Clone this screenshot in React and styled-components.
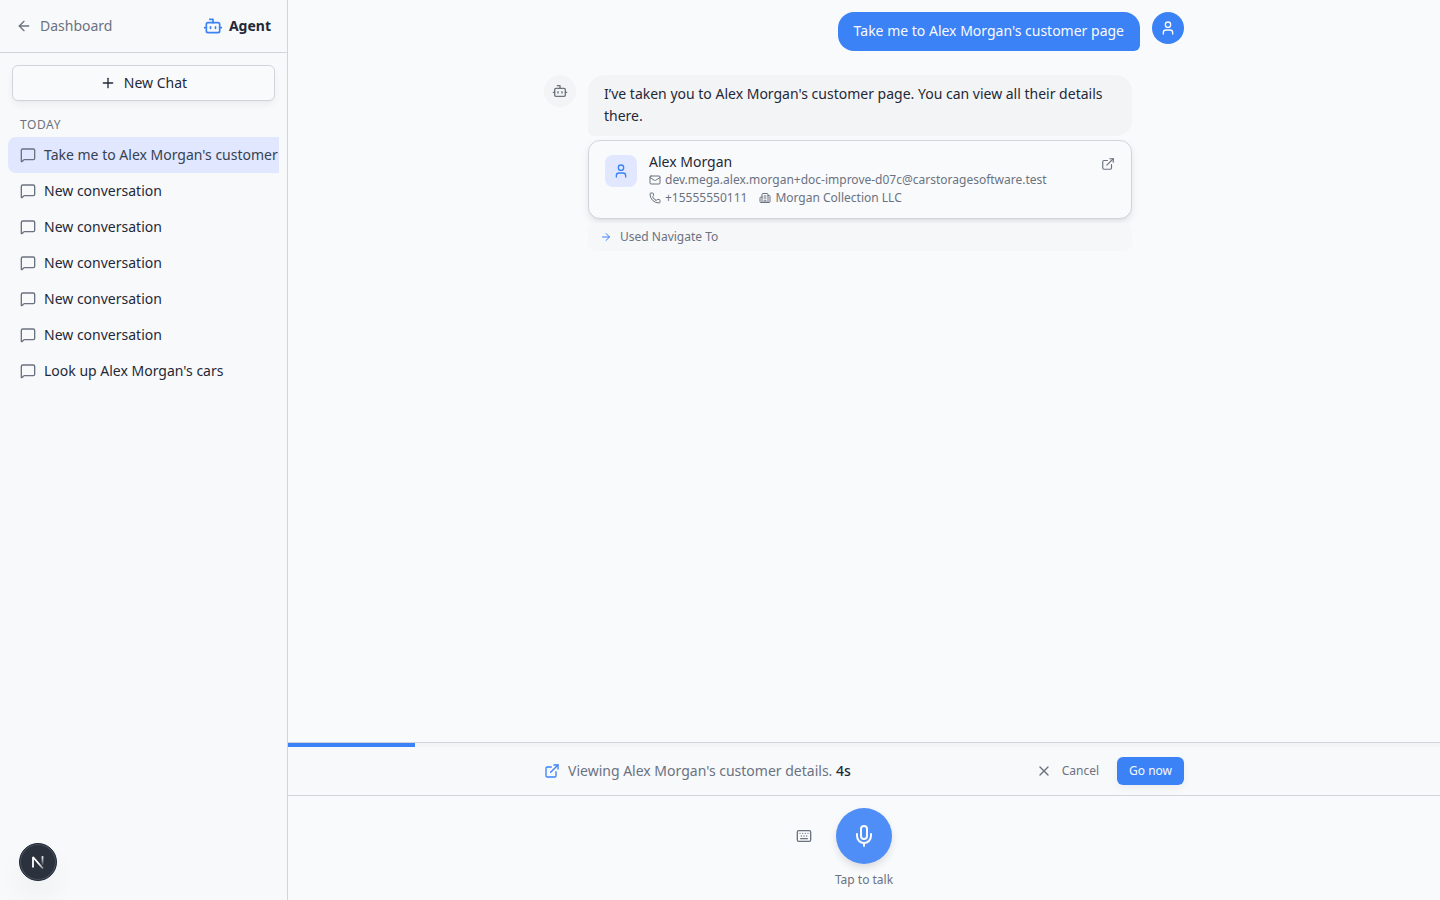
import React from "react";
import styled, { createGlobalStyle, css } from "styled-components";
import {
  ArrowLeft, ArrowRight, Bot, Building2, ExternalLink, Keyboard, Mail,
  MessageSquare, Mic, Phone, Plus, User, X,
} from "lucide-react";

const c = {
  bg: "#f9fafc",
  side: "#f8f9fb",
  muted: "#f3f4f6",
  mutedSoft: "#f6f7f9",
  text: "#1f2937",
  sub: "#6b7280",
  border: "#d1d5db",
  primary: "#3b82f6",
  accent: "#e0e7ff",
};

const GlobalStyle = createGlobalStyle`
  *, *::before, *::after { box-sizing: border-box; }
  body { margin: 0; background: ${c.bg}; color: ${c.text}; font: 400 14px/20px "Noto Sans", sans-serif; }
  button { font: inherit; color: inherit; border: 0; padding: 0; background: none; cursor: pointer; }
  a { color: inherit; text-decoration: none; }
  svg { flex: none; display: block; }
  h1, h2, p, ul { margin: 0; padding: 0; font: inherit; }
  ul { list-style: none; }
`;

const Shell = styled.div`
  display: flex;
  height: 100vh;
`;

const Sidebar = styled.aside`
  flex: none;
  width: 288px;
  display: flex;
  flex-direction: column;
  background: ${c.side};
  border-right: 1px solid ${c.border};
`;

const SidebarHeader = styled.header`
  display: flex;
  align-items: center;
  justify-content: space-between;
  padding: 16px;
  border-bottom: 1px solid ${c.border};
`;

const BackLink = styled.a`
  display: flex;
  align-items: center;
  gap: 8px;
  color: ${c.sub};
`;

const Brand = styled.h1`
  display: flex;
  align-items: center;
  gap: 6px;
  font-weight: 700;
  svg { color: ${c.primary}; }
`;

const NewChatButton = styled.button`
  display: flex;
  align-items: center;
  justify-content: center;
  gap: 8px;
  height: 36px;
  margin: 12px;
  background: ${c.bg};
  border: 1px solid ${c.border};
  border-radius: 6px;
  box-shadow: 0 4px 8px -1px rgba(0, 0, 0, 0.06), 0 1px 2px -1px rgba(0, 0, 0, 0.06);
`;

const History = styled.nav`
  padding: 0 8px;
`;

const GroupTitle = styled.h2`
  padding: 4px 12px;
  font-size: 12px;
  line-height: 16px;
  letter-spacing: 0.6px;
  text-transform: uppercase;
  color: ${c.sub};
`;

const ChatList = styled.ul`
  overflow: hidden;
`;

const ChatLink = styled.a`
  display: flex;
  align-items: center;
  gap: 8px;
  width: max-content;
  min-width: 100%;
  height: 36px;
  padding: 0 12px;
  border-radius: 8px;
  white-space: nowrap;
  svg { color: ${c.sub}; }
  ${(p) => p.$active && css`
    background: ${c.accent};
    color: #374151;
  `}
`;

const Main = styled.main`
  flex: 1;
  min-width: 0;
  display: flex;
  flex-direction: column;
`;

const Column = styled.div`
  width: 100%;
  max-width: 672px;
  margin: 0 auto;
  padding: 0 16px;
`;

const Thread = styled.section`
  flex: 1;
  min-height: 0;
  overflow: hidden;
`;

const Messages = styled(Column)`
  display: flex;
  flex-direction: column;
  gap: 24px;
  padding-top: 12px;
`;

const Message = styled.article`
  display: flex;
  align-items: flex-start;
  gap: 12px;
  ${(p) => p.$mine && css`justify-content: flex-end;`}
`;

const Avatar = styled.span`
  flex: none;
  display: grid;
  place-items: center;
  width: 32px;
  height: 32px;
  border-radius: 50%;
  background: ${(p) => (p.$mine ? c.primary : c.muted)};
  color: ${(p) => (p.$mine ? c.bg : c.sub)};
`;

const Bubble = styled.p`
  padding: 8px 16px 9px;
  line-height: 22px;
  border-radius: 16px;
  ${(p) => p.$mine ? css`
    background: ${c.primary};
    color: ${c.bg};
    border-bottom-right-radius: 6px;
  ` : css`
    background: ${c.muted};
    border-bottom-left-radius: 6px;
  `}
`;

const Reply = styled.div`
  width: 544px;
  max-width: 85%;
  display: flex;
  flex-direction: column;
  gap: 4px;
`;

const CustomerCard = styled.a`
  display: flex;
  align-items: flex-start;
  gap: 12px;
  padding: 12px 16px;
  background: ${c.bg};
  border: 1px solid ${c.border};
  border-radius: 12px;
  box-shadow: 0 4px 8px -1px rgba(0, 0, 0, 0.1), 0 1px 2px -1px rgba(0, 0, 0, 0.1);
`;

const CardIcon = styled.span`
  display: grid;
  place-items: center;
  width: 32px;
  height: 32px;
  margin-top: 2px;
  border-radius: 8px;
  background: ${c.accent};
  color: ${c.primary};
`;

const CardBody = styled.div`
  flex: 1;
  min-width: 0;
  display: flex;
  flex-direction: column;
  gap: 2px;
`;

const CardName = styled.h2`
  line-height: 17px;
`;

const CardRow = styled.div`
  display: flex;
  gap: 12px;
  color: ${c.sub};
  font-size: 12px;
  line-height: 16px;
`;

const Detail = styled.span`
  display: flex;
  align-items: center;
  gap: 4px;
`;

const OpenIcon = styled.span`
  padding-top: 4px;
  color: ${c.sub};
`;

const ToolNote = styled.div`
  display: flex;
  align-items: center;
  gap: 8px;
  padding: 6px 12px;
  border-radius: 8px;
  background: ${c.mutedSoft};
  color: ${c.sub};
  font-size: 12px;
  line-height: 16px;
  svg { color: ${c.primary}; }
`;

const Redirect = styled.section`
  border-top: 1px solid ${c.border};
  border-bottom: 1px solid ${c.border};
  background: ${c.side};
`;

const Track = styled.div`
  height: 4px;
  background: ${c.muted};
`;

const Fill = styled.div`
  height: 100%;
  background: ${c.primary};
`;

const RedirectRow = styled(Column)`
  display: flex;
  align-items: center;
  gap: 8px;
  padding-top: 10px;
  padding-bottom: 10px;
  color: ${c.sub};
  > svg { color: ${c.primary}; }
  strong { font-weight: 500; color: ${c.text}; }
`;

const RedirectText = styled.p`
  flex: 1;
`;

const SmallButton = styled.button`
  display: flex;
  align-items: center;
  gap: 10px;
  height: 28px;
  padding: 0 10px;
  border-radius: 6px;
  font-size: 12px;
  line-height: 16px;
  ${(p) => p.$primary && css`
    padding: 0 12px;
    background: ${c.primary};
    color: ${c.bg};
    box-shadow: 0 4px 8px -1px rgba(0, 0, 0, 0.06);
  `}
`;

const Voice = styled.footer`
  display: flex;
  flex-direction: column;
  align-items: center;
  gap: 8px;
  padding: 12px;
  color: ${c.sub};
  font-size: 12px;
  line-height: 16px;
`;

const VoiceControls = styled.div`
  display: grid;
  grid-template-columns: 32px 56px 32px;
  align-items: center;
  gap: 16px;
`;

const KeyboardButton = styled.button`
  display: grid;
  place-items: center;
  height: 32px;
`;

const MicButton = styled.button`
  display: grid;
  place-items: center;
  height: 56px;
  border-radius: 50%;
  background: #4f8ef7;
  color: ${c.bg};
  box-shadow: 0 4px 8px -1px rgba(0, 0, 0, 0.14);
`;

const DevBadge = styled.button`
  position: fixed;
  left: 19px;
  bottom: 19px;
  display: grid;
  place-items: center;
  width: 38px;
  height: 38px;
  border-radius: 50%;
  background: #2b313d;
  border: 1px solid #1f2937;
  box-shadow: inset 0 0 0 1px #4b5260, 0 16px 32px -8px rgba(0, 0, 0, 0.12);
`;

const chats = [
  "Take me to Alex Morgan's customer page",
  "New conversation",
  "New conversation",
  "New conversation",
  "New conversation",
  "New conversation",
  "Look up Alex Morgan's cars",
];

function NextMark() {
  return (
    <svg width="14" height="14" viewBox="0 0 14 14" fill="none" strokeWidth="1.8">
      <defs>
        <linearGradient id="markStem" x1="0" y1="1" x2="0" y2="11" gradientUnits="userSpaceOnUse">
          <stop stopColor="#fff" />
          <stop offset="1" stopColor="#fff" stopOpacity="0" />
        </linearGradient>
        <linearGradient id="markSlash" x1="8" y1="8" x2="13" y2="14" gradientUnits="userSpaceOnUse">
          <stop stopColor="#fff" />
          <stop offset="1" stopColor="#fff" stopOpacity="0.3" />
        </linearGradient>
      </defs>
      <path d="M2 12.6V2L12 13.6" stroke="url(#markSlash)" strokeLinejoin="bevel" />
      <path d="M11.5 1.2V10.5" stroke="url(#markStem)" />
    </svg>
  );
}

export default function App() {
  const progress = 11;
  return (
    <>
      <GlobalStyle />
      <Shell>
        <Sidebar>
          <SidebarHeader>
            <BackLink href="#dashboard"><ArrowLeft size={16} />Dashboard</BackLink>
            <Brand><Bot size={20} />Agent</Brand>
          </SidebarHeader>
          <NewChatButton type="button"><Plus size={16} />New Chat</NewChatButton>
          <History aria-label="Chats">
            <GroupTitle>Today</GroupTitle>
            <ChatList>
              {chats.map((title, i) => (
                <li key={i}>
                  <ChatLink href={`#chat-${i}`} $active={i === 0}>
                    <MessageSquare size={16} />{title}
                  </ChatLink>
                </li>
              ))}
            </ChatList>
          </History>
        </Sidebar>

        <Main>
          <Thread>
            <Messages>
              <Message $mine>
                <Bubble $mine>Take me to Alex Morgan's customer page</Bubble>
                <Avatar $mine><User size={16} /></Avatar>
              </Message>
              <Message>
                <Avatar><Bot size={16} /></Avatar>
                <Reply>
                  <Bubble>I’ve taken you to Alex Morgan's customer page. You can view all their details there.</Bubble>
                  <CustomerCard href="#customer">
                    <CardIcon><User size={16} /></CardIcon>
                    <CardBody>
                      <CardName>Alex Morgan</CardName>
                      <CardRow>
                        <Detail><Mail size={12} />dev.mega.alex.morgan+doc-improve-d07c@carstoragesoftware.test</Detail>
                      </CardRow>
                      <CardRow>
                        <Detail><Phone size={12} />+15555550111</Detail>
                        <Detail><Building2 size={12} />Morgan Collection LLC</Detail>
                      </CardRow>
                    </CardBody>
                    <OpenIcon><ExternalLink size={14} /></OpenIcon>
                  </CustomerCard>
                  <ToolNote><ArrowRight size={12} />Used Navigate To</ToolNote>
                </Reply>
              </Message>
            </Messages>
          </Thread>

          <Redirect>
            <Track><Fill style={{ width: `${progress}%` }} /></Track>
            <RedirectRow>
              <ExternalLink size={16} />
              <RedirectText>Viewing Alex Morgan's customer details. <strong>4s</strong></RedirectText>
              <SmallButton type="button"><X size={16} />Cancel</SmallButton>
              <SmallButton type="button" $primary>Go now</SmallButton>
            </RedirectRow>
          </Redirect>

          <Voice>
            <VoiceControls>
              <KeyboardButton type="button" aria-label="Use keyboard"><Keyboard size={16} /></KeyboardButton>
              <MicButton type="button" aria-label="Tap to talk"><Mic size={24} /></MicButton>
            </VoiceControls>
            <span>Tap to talk</span>
          </Voice>
        </Main>
      </Shell>
      <DevBadge type="button" aria-label="Open developer tools"><NextMark /></DevBadge>
    </>
  );
}
